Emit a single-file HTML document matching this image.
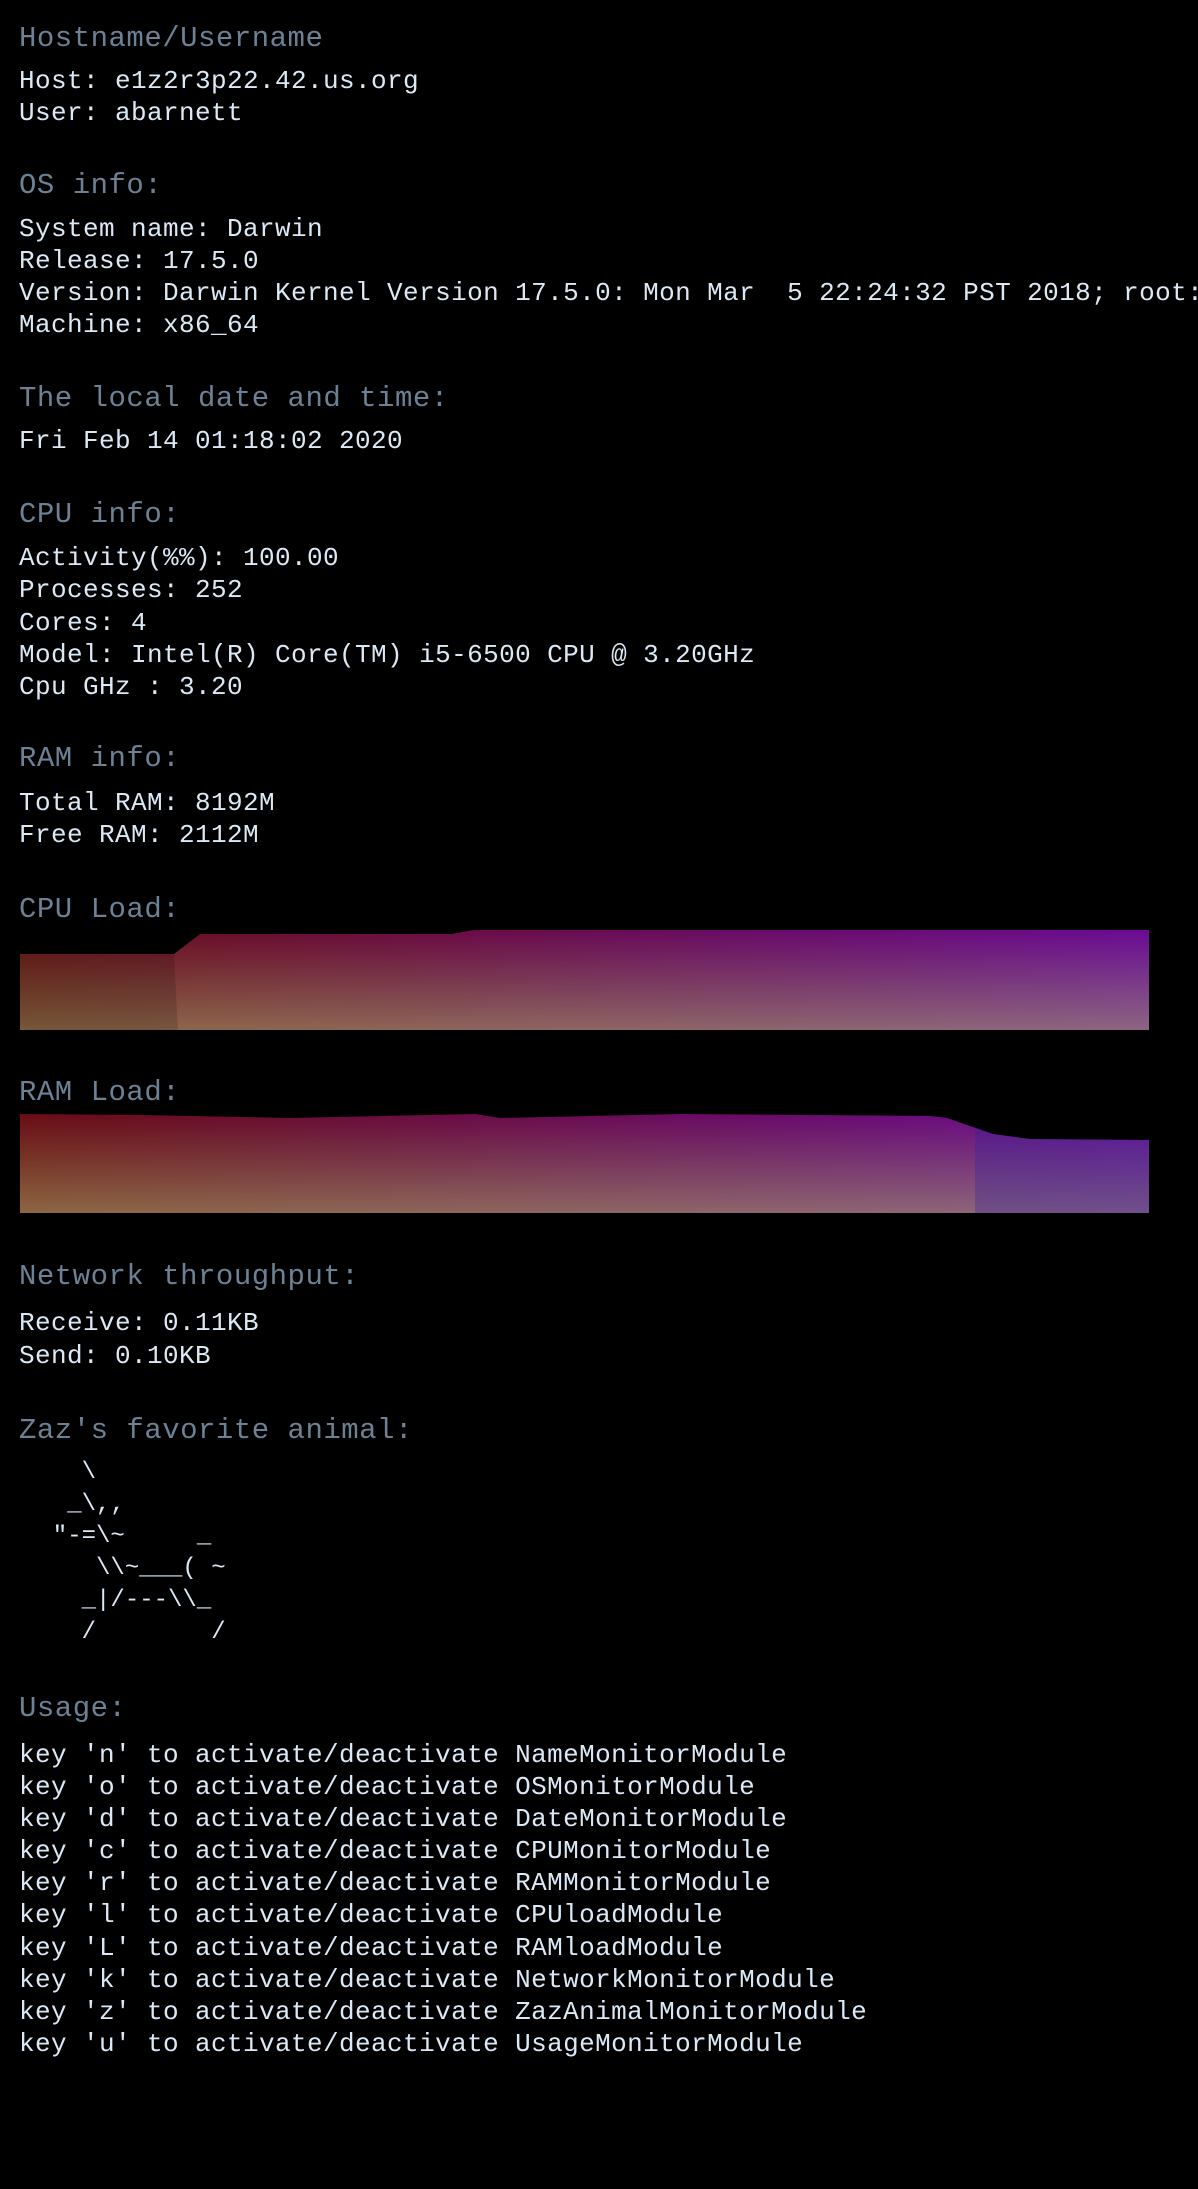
<!DOCTYPE html>
<html><head><meta charset="utf-8"><style>
html,body{margin:0;padding:0;background:#000;}
body{width:1198px;height:2189px;position:relative;overflow:hidden;font-family:"Liberation Mono","DejaVu Sans Mono",monospace;}
#w{position:absolute;left:0;top:0;width:1198px;height:2189px;overflow:hidden;}
.h,.t{position:absolute;left:19px;white-space:pre;line-height:32px;height:32px;}
.h{font-size:29px;letter-spacing:0.5px;color:#6d8195;}
.t{font-size:26px;letter-spacing:0.4px;color:#dbe8f6;}
pre{position:absolute;left:24px;top:1457px;margin:0;font-family:"Liberation Mono",monospace;font-size:24px;line-height:32px;color:#dbe8f6;}
svg{position:absolute;left:0;top:0;}
</style></head><body><div id="w">
<svg width="1198" height="2189">
<defs>
<linearGradient id="gh" x1="0" x2="1" y1="0" y2="0">
<stop offset="0" stop-color="#6a0c14"/><stop offset="0.5" stop-color="#6a0a55"/><stop offset="1" stop-color="#6a0a95"/></linearGradient>
<linearGradient id="gv" x1="0" x2="0" y1="0" y2="1">
<stop offset="0" stop-color="#a0c060" stop-opacity="0"/><stop offset="1" stop-color="#b0c070" stop-opacity="0.5"/></linearGradient>
</defs>
<path d="M20 954 L174 954 L200 934 L451 934 L474 930 L1149 930 L1149 1030 L20 1030Z" fill="url(#gh)"/>
<path d="M20 954 L174 954 L200 934 L451 934 L474 930 L1149 930 L1149 1030 L20 1030Z" fill="url(#gv)"/>
<path d="M20 954 L174 954 L178 1030 L20 1030Z" fill="#000" opacity="0.15"/>
<path d="M20 1114 L140 1115 L290 1118 L475 1114 L500 1118 L680 1114 L810 1115 L930 1116 L947 1118 L993 1134 L1030 1139 L1149 1140 L1149 1213 L20 1213Z" fill="url(#gh)"/>
<path d="M20 1114 L140 1115 L290 1118 L475 1114 L500 1118 L680 1114 L810 1115 L930 1116 L947 1118 L993 1134 L1030 1139 L1149 1140 L1149 1213 L20 1213Z" fill="url(#gv)"/>
<path d="M975 1128 L993 1134 L1030 1139 L1149 1140 L1149 1213 L975 1213Z" fill="#3020a0" opacity="0.3"/>
</svg>
<div class="h" style="top:23px">Hostname/Username</div>
<div class="t" style="top:65px">Host: e1z2r3p22.42.us.org</div>
<div class="t" style="top:97px">User: abarnett</div>
<div class="h" style="top:170px">OS info:</div>
<div class="t" style="top:213px">System name: Darwin</div>
<div class="t" style="top:245px">Release: 17.5.0</div>
<div class="t" style="top:277px">Version: Darwin Kernel Version 17.5.0: Mon Mar  5 22:24:32 PST 2018; root:x</div>
<div class="t" style="top:309px">Machine: x86_64</div>
<div class="h" style="top:383px">The local date and time:</div>
<div class="t" style="top:425px">Fri Feb 14 01:18:02 2020</div>
<div class="h" style="top:499px">CPU info:</div>
<div class="t" style="top:542px">Activity(%%): 100.00</div>
<div class="t" style="top:574px">Processes: 252</div>
<div class="t" style="top:607px">Cores: 4</div>
<div class="t" style="top:639px">Model: Intel(R) Core(TM) i5-6500 CPU @ 3.20GHz</div>
<div class="t" style="top:671px">Cpu GHz : 3.20</div>
<div class="h" style="top:743px">RAM info:</div>
<div class="t" style="top:787px">Total RAM: 8192M</div>
<div class="t" style="top:819px">Free RAM: 2112M</div>
<div class="h" style="top:894px">CPU Load:</div>
<div class="h" style="top:1077px">RAM Load:</div>
<div class="h" style="top:1261px">Network throughput:</div>
<div class="t" style="top:1307px">Receive: 0.11KB</div>
<div class="t" style="top:1340px">Send: 0.10KB</div>
<div class="h" style="top:1415px">Zaz's favorite animal:</div>
<pre>    \
   _\,,
  "-=\~     _
     \\~___( ~
    _|/---\\_
    /        /</pre>
<div class="h" style="top:1693px">Usage:</div>
<div class="t" style="top:1739px">key 'n' to activate/deactivate NameMonitorModule</div>
<div class="t" style="top:1771px">key 'o' to activate/deactivate OSMonitorModule</div>
<div class="t" style="top:1803px">key 'd' to activate/deactivate DateMonitorModule</div>
<div class="t" style="top:1835px">key 'c' to activate/deactivate CPUMonitorModule</div>
<div class="t" style="top:1867px">key 'r' to activate/deactivate RAMMonitorModule</div>
<div class="t" style="top:1899px">key 'l' to activate/deactivate CPUloadModule</div>
<div class="t" style="top:1932px">key 'L' to activate/deactivate RAMloadModule</div>
<div class="t" style="top:1964px">key 'k' to activate/deactivate NetworkMonitorModule</div>
<div class="t" style="top:1996px">key 'z' to activate/deactivate ZazAnimalMonitorModule</div>
<div class="t" style="top:2028px">key 'u' to activate/deactivate UsageMonitorModule</div>
</div></body></html>
